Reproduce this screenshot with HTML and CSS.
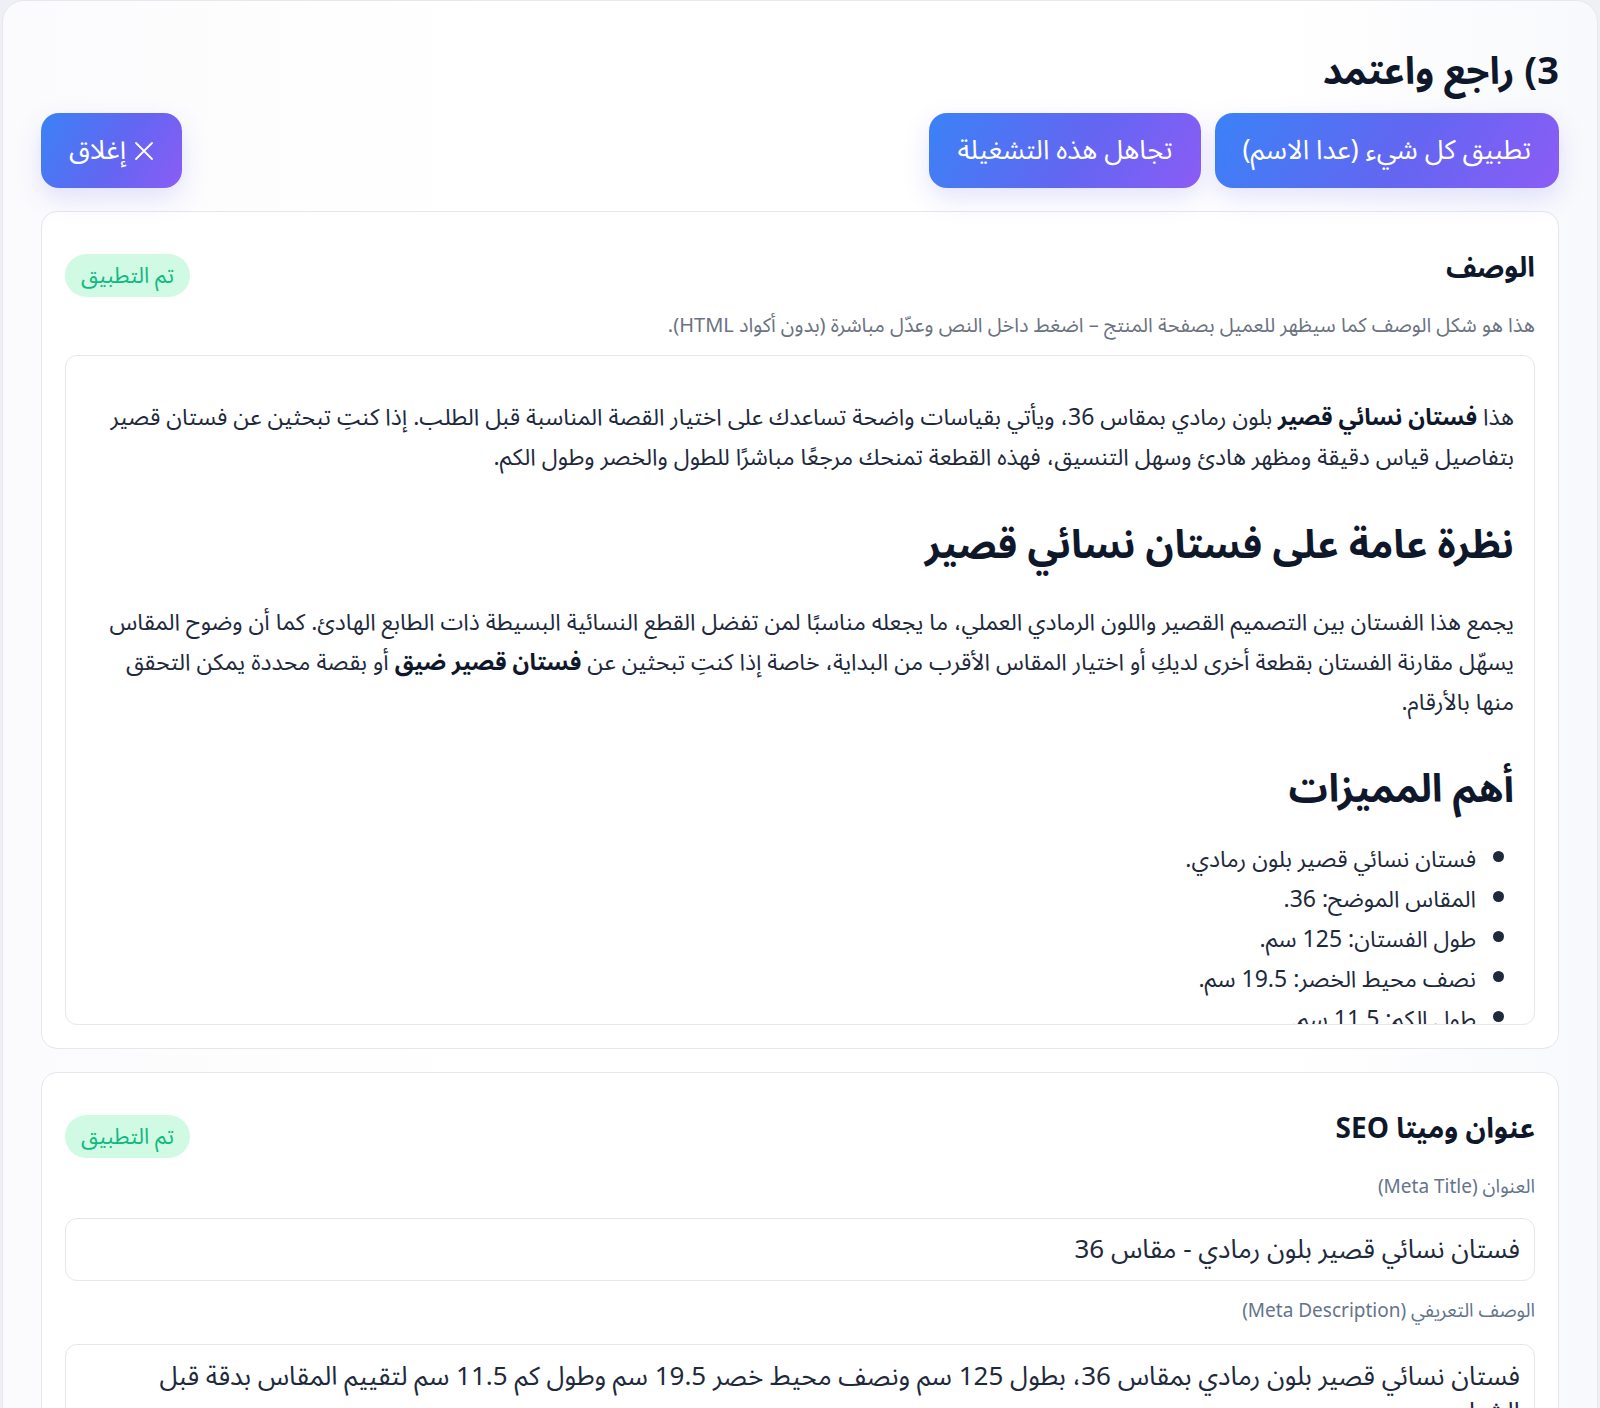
FILE: index.html
```html
<!DOCTYPE html>
<html lang="ar" dir="rtl">
<head>
<meta charset="utf-8">
<title>راجع واعتمد</title>
<link rel="stylesheet" href="styles.css">
</head>
<body>
<div class="frame">
  <h1 class="step-title">3) راجع واعتمد</h1>
  <div class="actions">
    <div class="actions-main">
      <button class="btn">تطبيق كل شيء (عدا الاسم)</button>
      <button class="btn">تجاهل هذه التشغيلة</button>
    </div>
    <button class="btn btn-close">
      <svg class="x-icon" viewBox="0 0 20 20" width="20" height="20" aria-hidden="true"><path d="M2 2 L18 18 M18 2 L2 18" stroke="#fff" stroke-width="1.8" stroke-linecap="round" fill="none"/></svg>
      <span>إغلاق</span>
    </button>
  </div>

  <section class="card">
    <div class="card-head">
      <h2 class="card-title">الوصف</h2>
      <span class="badge">تم التطبيق</span>
    </div>
    <p class="hint">هذا هو شكل الوصف كما سيظهر للعميل بصفحة المنتج – اضغط داخل النص وعدّل مباشرة (بدون أكواد HTML).</p>
    <div class="preview">
      <p>هذا <strong>فستان نسائي قصير</strong> بلون رمادي بمقاس 36، ويأتي بقياسات واضحة تساعدك على اختيار القصة المناسبة قبل الطلب. إذا كنتِ تبحثين عن فستان قصير بتفاصيل قياس دقيقة ومظهر هادئ وسهل التنسيق، فهذه القطعة تمنحك مرجعًا مباشرًا للطول والخصر وطول الكم.</p>
      <h2>نظرة عامة على فستان نسائي قصير</h2>
      <p>يجمع هذا الفستان بين التصميم القصير واللون الرمادي العملي، ما يجعله مناسبًا لمن تفضل القطع النسائية البسيطة ذات الطابع الهادئ. كما أن وضوح المقاس يسهّل مقارنة الفستان بقطعة أخرى لديكِ أو اختيار المقاس الأقرب من البداية، خاصة إذا كنتِ تبحثين عن <strong>فستان قصير ضيق</strong> أو بقصة محددة يمكن التحقق منها بالأرقام.</p>
      <h3>أهم المميزات</h3>
      <ul>
        <li>فستان نسائي قصير بلون رمادي.</li>
        <li>المقاس الموضح: 36.</li>
        <li>طول الفستان: 125 سم.</li>
        <li>نصف محيط الخصر: 19.5 سم.</li>
        <li>طول الكم: 11.5 سم.</li>
      </ul>
    </div>
  </section>

  <section class="card">
    <div class="card-head">
      <h2 class="card-title">عنوان وميتا SEO</h2>
      <span class="badge">تم التطبيق</span>
    </div>
    <label class="field-label">العنوان (Meta Title)</label>
    <div class="input">فستان نسائي قصير بلون رمادي - مقاس 36</div>
    <label class="field-label">الوصف التعريفي (Meta Description)</label>
    <div class="textarea">فستان نسائي قصير بلون رمادي بمقاس 36، بطول 125 سم ونصف محيط خصر 19.5 سم وطول كم 11.5 سم لتقييم المقاس بدقة قبل الشراء.</div>
  </section>
</div>
</body>
</html>
```

FILE: styles.css
```css
* { box-sizing: border-box; }

html, body {
  margin: 0;
  padding: 0;
}

body {
  background: #eef0f5;
  font-family: "Noto Sans Arabic", "DejaVu Sans", "Noto Sans", sans-serif;
  color: #1e293b;
  overflow: hidden;
  height: 1408px;
}

.frame {
  margin: 0 2px;
  background: linear-gradient(90deg, #fbfbfd 0%, #ffffff 30%, #ffffff 80%, #f8f9fc 100%);
  border: 1px solid #e6e8ef;
  border-radius: 22px;
  padding: 48px 38px 40px;
  min-height: 1500px;
}

.step-title {
  margin: 0;
  font-size: 38px;
  line-height: 46px;
  font-weight: 700;
  color: #0f172a;
}

.actions {
  display: flex;
  justify-content: space-between;
  align-items: center;
  margin-top: 18px;
}

.actions-main {
  display: flex;
  gap: 14px;
}

.btn {
  display: inline-flex;
  align-items: center;
  gap: 8px;
  height: 75px;
  padding: 0 28px;
  border: 0;
  border-radius: 18px;
  background: linear-gradient(120deg, #3b82f6 0%, #6366f1 55%, #8b5cf6 100%);
  color: #ffffff;
  font-family: inherit;
  font-size: 27px;
  box-shadow: 0 10px 26px rgba(99, 102, 241, 0.18);
  cursor: pointer;
}

.btn-close { padding: 0 28px 0 28px; }

.x-icon { flex: none; }

.card {
  margin-top: 23px;
  background: #ffffff;
  border: 1px solid #e5e7ee;
  border-radius: 16px;
  padding: 42px 23px 23px;
}

.card + .card { margin-top: 23px; }

.card-head {
  display: flex;
  justify-content: space-between;
  align-items: center;
  height: 43px;
}

.card-title {
  margin: 0;
  font-size: 28px;
  font-weight: 700;
  color: #0f172a;
  align-self: flex-start;
  line-height: 30px;
}

.badge {
  display: inline-flex;
  align-items: center;
  height: 43px;
  padding: 0 16px;
  border-radius: 22px;
  background: #d1fae5;
  color: #10b981;
  font-size: 22px;
}

.hint {
  margin: 16px 0 0;
  font-size: 20px;
  line-height: 26px;
  color: #6b7280;
}

.preview {
  margin-top: 16px;
  height: 670px;
  overflow: hidden;
  border: 1px solid #e5e7ee;
  border-radius: 12px;
  padding: 22px 20px 0;
  color: #1e293b;
}

.preview p {
  margin: 20px 0 0;
  font-size: 23px;
  line-height: 40px;
}

.preview strong { font-weight: 700; color: #0f172a; }

.preview h2 {
  margin: 43px 0 32px;
  font-size: 39px;
  line-height: 50px;
  font-weight: 700;
  color: #0f172a;
}

.preview h3 {
  margin: 42px 0 25px;
  font-size: 39px;
  line-height: 50px;
  font-weight: 700;
  color: #0f172a;
}

.preview ul {
  margin: 0;
  padding: 0 38px 0 0;
}

.preview li {
  font-size: 23px;
  line-height: 40px;
}

.field-label {
  display: block;
  margin-top: 16px;
  font-size: 19px;
  line-height: 26px;
  color: #64748b;
}

.input {
  margin-top: 18px;
  height: 63px;
  display: flex;
  align-items: center;
  padding: 0 14px;
  border: 1px solid #e5e7ee;
  border-radius: 12px;
  font-size: 26px;
  color: #1e293b;
}

.input + .field-label { margin-top: 17px; }

.textarea {
  margin-top: 20px;
  padding: 14px 14px 14px 44px;
  border: 1px solid #e5e7ee;
  border-radius: 12px;
  font-size: 26px;
  line-height: 36px;
  color: #1e293b;
  min-height: 110px;
}
```
